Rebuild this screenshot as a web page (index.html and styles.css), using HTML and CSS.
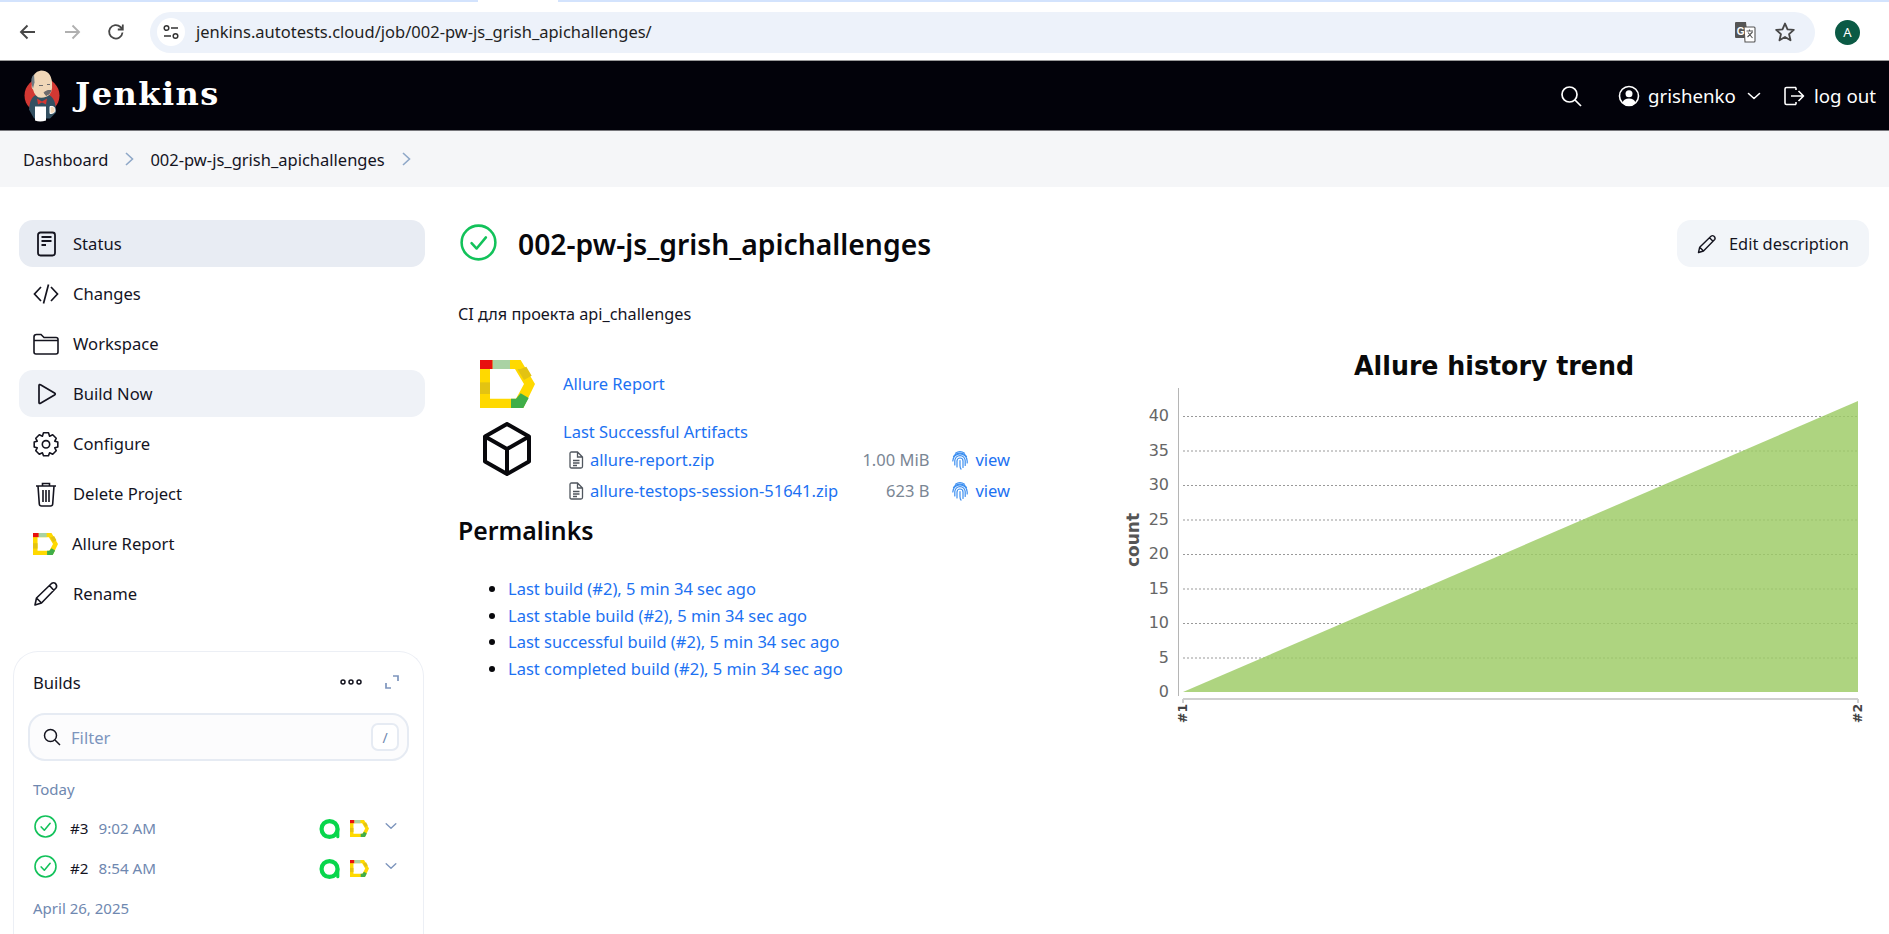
FILE: index.html
```html
<!DOCTYPE html>
<html lang="en">
<head>
<meta charset="utf-8">
<title>002-pw-js_grish_apichallenges - Jenkins</title>
<link rel="stylesheet" href="styles.css">
</head>
<body>
<svg class="defs" width="0" height="0">
  <symbol id="allure" viewBox="0 0 165 144" preserveAspectRatio="none">
    <path fill="#ffd900" fill-rule="evenodd" d="M0 0H122L165 72L130 144H0ZM30 27V116H108L132 72L105 27Z"/>
    <rect width="38" height="27" fill="#e8100f"/>
    <rect x="38" width="52" height="27" fill="#a9d2a4"/>
    <rect y="67" width="30" height="35" fill="#e3c312"/>
    <path fill="#e3c312" d="M112 27H122L139 20L155 47L132 60Z"/>
    <path fill="#3fae49" d="M93 116H108L122 100L146 114L130 144H93Z"/>
  </symbol>
  <symbol id="okc" viewBox="0 0 32 32">
    <circle cx="16" cy="16" r="14.6" fill="none" stroke="#12c25a" stroke-width="2.2"/>
    <path d="M10 16.6l4.4 4.6 8-9.6" fill="none" stroke="#12c25a" stroke-width="2.2" stroke-linecap="round" stroke-linejoin="round"/>
  </symbol>
  <symbol id="alogo" viewBox="0 0 24 24">
    <circle cx="11.500" cy="12" r="8.700" fill="none" stroke="#08d64c" stroke-width="4.600"/>
    <path d="M20.500 12V20.500" fill="none" stroke="#08d64c" stroke-width="3.400" stroke-linecap="round"/>
  </symbol>
  <symbol id="chev" viewBox="0 0 16 16">
    <path d="M2.500 5.500L8 10.500L13.500 5.500" fill="none" stroke="currentColor" stroke-width="1.600" stroke-linecap="round" stroke-linejoin="round"/>
  </symbol>
  <symbol id="file" viewBox="0 0 16 18">
    <path d="M2 2.500Q2 1 3.500 1H9.500L14.500 6V15.500Q14.500 17 13 17H3.500Q2 17 2 15.500ZM9.500 1V6H14.500M5 9.500H11.500M5 12H11.500M5 14.500H9" fill="none" stroke="#50565e" stroke-width="1.300"/>
  </symbol>
  <symbol id="finger" viewBox="0 0 18 20">
    <g fill="none" stroke="#3d8ff0" stroke-width="1.200" stroke-linecap="round">
      <path d="M4.500 3.200A8 8 0 0 1 13.500 3.200"/>
      <path d="M2.500 6.500A8 8 0 0 1 15.500 6.500"/>
      <path d="M1.800 11A7.200 7.200 0 0 1 16.200 11V13"/>
      <path d="M3.800 15V10.800A5.200 5.200 0 0 1 14.200 10.800V15.500"/>
      <path d="M6 17V11A3 3 0 0 1 12 11V17.500"/>
      <path d="M9 10.500V15.500Q9 18 10 19"/>
    </g>
  </symbol>
</svg>

<div class="tabstrip"></div>
<div class="browserbar">
  <svg class="nav-ic" viewBox="0 0 20 20"><path d="M17 10H3.500M9.500 3.500L3 10L9.500 16.500" fill="none" stroke="#474747" stroke-width="1.900"/></svg>
  <svg class="nav-ic" viewBox="0 0 20 20"><path d="M3 10H16.500M10.500 3.500L17 10L10.500 16.500" fill="none" stroke="#b0b0b0" stroke-width="1.900"/></svg>
  <svg class="nav-ic" viewBox="0 0 20 20"><path d="M16.500 10.500A6.700 6.700 0 1 1 14.500 5L16.500 7M16.800 2.500V7.500H11.800" fill="none" stroke="#474747" stroke-width="1.800"/></svg>
  <div class="omnibox">
    <span class="site-info">
      <svg viewBox="0 0 20 20" width="20" height="20"><circle cx="5.500" cy="6" r="2.300" fill="none" stroke="#333" stroke-width="1.500"/><path d="M10 6H17M3 14H10" stroke="#333" stroke-width="1.500"/><circle cx="14.500" cy="14" r="2.300" fill="none" stroke="#333" stroke-width="1.500"/></svg>
    </span>
    <span class="url">jenkins.autotests.cloud/job/002-pw-js_grish_apichallenges/</span>
    <svg class="translate" viewBox="0 0 22 22" width="22" height="22">
      <path d="M1 1H12L14 6H20Q21 6 21 7V20Q21 21 20 21H10L9 17H1Z" fill="#fff"/>
      <path d="M2 1H12L14 17H2Q1 17 1 16V2Q1 1 2 1Z" fill="#555"/>
      <path d="M10 6H20Q21 6 21 7V20Q21 21 20 21H11ZM12.500 10H19M15.500 8.500V10M13.500 16L18.500 11M14 11.500L18.500 17" fill="#fff" stroke="#555" stroke-width="1.100"/>
      <text x="2.800" y="13.500" class="translate-g">G</text>
    </svg>
    <svg class="star" viewBox="0 0 20 20" width="22" height="22"><path d="M10 2.300L12.300 7.600L18 8.100L13.700 11.900L15 17.500L10 14.500L5 17.500L6.300 11.900L2 8.100L7.700 7.600Z" fill="none" stroke="#474747" stroke-width="1.700" stroke-linejoin="round"/></svg>
  </div>
  <span class="avatar">A</span>
</div>

<header class="topbar">
  <a class="brand">
    <svg class="butler" viewBox="0 0 36 54" width="36" height="55">
      <circle cx="18" cy="27" r="17.500" fill="#d33833"/>
      <path d="M5 41Q6 27 14 26L24 26Q32 29 32 44L26 50H10Z" fill="#335061"/>
      <path d="M8 15Q8 3 17 2Q27 2 28 14Q29 25 23 28Q15 31 12 27Q10 25 9 21Q7 20 8 15Z" fill="#f0d6b7"/>
      <path d="M8 17Q6 9 10 6L10.500 14L9 20Z" fill="#6d7a83"/>
      <path d="M15 17H19M23 16H26M20 24Q24 21 27 22Q26 26 22 27Z" fill="#6d6b6d" stroke="#6d6b6d"/>
      <path d="M13 30L18 33L23 30L22 36L18 34L14 36Z" fill="#d33833"/>
      <path d="M11 38H22L22 52Q16 54 11 52Z" fill="#fff"/>
      <path d="M26 38Q31 37 31 42Q31 45 26 45Z" fill="#f0d6b7" stroke="#fff"/>
    </svg>
    <span class="brand-name">Jenkins</span>
  </a>
  <div class="top-actions">
    <svg class="top-search" viewBox="0 0 24 24" width="24" height="24"><circle cx="10.500" cy="10.500" r="7.500" fill="none" stroke="#fff" stroke-width="1.700"/><path d="M16 16L22 22" stroke="#fff" stroke-width="1.700"/></svg>
    <a class="user">
      <svg viewBox="0 0 22 22" width="22" height="22"><circle cx="11" cy="11" r="9.500" fill="none" stroke="#fff" stroke-width="1.600"/><circle cx="11" cy="8.800" r="3.500" fill="#fff"/><path d="M4.500 17.500Q6 13.500 11 13.500Q16 13.500 17.500 17.500Q15 20.500 11 20.500Q7 20.500 4.500 17.500Z" fill="#fff"/></svg>
      <span>grishenko</span>
      <svg class="user-chev" width="16" height="16"><use href="#chev"/></svg>
    </a>
    <a class="logout">
      <svg viewBox="0 0 22 22" width="22" height="22"><path d="M13 2.500H3.500Q2 2.500 2 4V18Q2 19.500 3.500 19.500H13M8 11H20.500M15.500 6L20.500 11L15.500 16" fill="none" stroke="#fff" stroke-width="1.600" stroke-linejoin="round"/><path d="M13 2.500V5M13 17V19.500" stroke="#fff" stroke-width="1.600"/></svg>
      <span>log out</span>
    </a>
  </div>
</header>

<nav class="crumbs">
  <a>Dashboard</a>
  <svg class="crumb-sep" viewBox="0 0 12 16" width="12" height="16"><path d="M3 2L9.500 8L3 14" fill="none" stroke="#8fa8c8" stroke-width="1.600"/></svg>
  <a>002-pw-js_grish_apichallenges</a>
  <svg class="crumb-sep" viewBox="0 0 12 16" width="12" height="16"><path d="M3 2L9.500 8L3 14" fill="none" stroke="#8fa8c8" stroke-width="1.600"/></svg>
</nav>

<div class="page">
  <aside class="side">
    <ul class="tasks">
      <li class="task task-active">
        <svg viewBox="0 0 26 26" width="26" height="26"><rect x="5" y="1.500" width="17" height="23" rx="2.500" fill="none" stroke="#14141f" stroke-width="1.800"/><path d="M8.500 6H18.500M8.500 10H18.500M8.500 14H13" stroke="#14141f" stroke-width="1.800"/></svg>
        <span>Status</span>
      </li>
      <li class="task">
        <svg viewBox="0 0 26 26" width="26" height="26"><path d="M8 6L1.500 13L8 20M18 6L24.500 13L18 20M15.500 3.500L10.500 22.500" fill="none" stroke="#14141f" stroke-width="1.700"/></svg>
        <span>Changes</span>
      </li>
      <li class="task">
        <svg viewBox="0 0 26 26" width="26" height="26"><path d="M1 6Q1 3.500 3.500 3.500H8L11 6.500H23Q25 6.500 25 8.500V21Q25 23 23 23H3Q1 23 1 21ZM1 9.500H25" fill="none" stroke="#14141f" stroke-width="1.600"/></svg>
        <span>Workspace</span>
      </li>
      <li class="task task-build">
        <svg viewBox="0 0 26 26" width="26" height="26"><path d="M6 4.500Q6 3 7.500 3.800L21.500 12Q23 13 21.500 14L7.500 22.200Q6 23 6 21.500Z" fill="none" stroke="#14141f" stroke-width="1.700"/></svg>
        <span>Build Now</span>
      </li>
      <li class="task">
        <svg viewBox="0 0 26 26" width="26" height="26"><path d="M10.500 1.800H15.500L16.600 5.200L19.700 3.800L23.200 7.300L21.800 10.200L24.800 11V16L21.800 16.800L23.200 19.700L19.700 23.200L16.600 21.800L15.500 24.800H10.500L9.400 21.800L6.300 23.200L2.800 19.700L4.200 16.800L1.200 16V11L4.200 10.200L2.800 7.300L6.300 3.800L9.400 5.200Z" fill="none" stroke="#14141f" stroke-width="1.600" stroke-linejoin="round"/><circle cx="13" cy="13.300" r="3.700" fill="none" stroke="#14141f" stroke-width="1.600"/></svg>
        <span>Configure</span>
      </li>
      <li class="task">
        <svg viewBox="0 0 26 26" width="26" height="26"><path d="M3 5H23M9.500 5V2.500H16.500V5M5 5L6.300 23Q6.500 25 8.500 25H17.500Q19.500 25 19.700 23L21 5M10 9V21M13 9V21M16 9V21" fill="none" stroke="#14141f" stroke-width="1.600"/></svg>
        <span>Delete Project</span>
      </li>
      <li class="task">
        <svg class="task-allure" width="25" height="22"><use href="#allure"/></svg>
        <span>Allure Report</span>
      </li>
      <li class="task">
        <svg viewBox="0 0 26 26" width="26" height="26"><path d="M2 24L3.500 17L18.500 2.500Q20.500 1 22.500 2.500Q24.500 5 23 7L8.500 22ZM3.500 17L8.500 22M16.500 4.500L21 9.500" fill="none" stroke="#14141f" stroke-width="1.600" stroke-linejoin="round"/></svg>
        <span>Rename</span>
      </li>
    </ul>

    <section class="builds">
      <div class="builds-head">
        <span class="builds-title">Builds</span>
        <svg viewBox="0 0 22 8" width="22" height="8"><g fill="none" stroke="#14141f" stroke-width="1.500"><circle cx="3" cy="4" r="2"/><circle cx="11" cy="4" r="2"/><circle cx="19" cy="4" r="2"/></g></svg>
        <svg class="expand" viewBox="0 0 16 16" width="16" height="16"><path d="M9 2H14V7M2 9V14H7" fill="none" stroke="#7d95bd" stroke-width="1.700"/></svg>
      </div>
      <div class="filter">
        <svg viewBox="0 0 20 20" width="20" height="20"><circle cx="8.500" cy="8.500" r="6" fill="none" stroke="#14141f" stroke-width="1.500"/><path d="M13 13L18 18" stroke="#14141f" stroke-width="1.500"/></svg>
        <span class="filter-ph">Filter</span>
        <kbd class="filter-key">/</kbd>
      </div>
      <div class="day">Today</div>
      <div class="build">
        <svg class="build-ok" width="23" height="23"><use href="#okc"/></svg>
        <span class="build-no">#3</span>
        <span class="build-time">9:02 AM</span>
        <svg class="build-a" width="22" height="22"><use href="#alogo"/></svg>
        <svg class="build-al" width="19" height="17"><use href="#allure"/></svg>
        <svg class="build-chev" width="14" height="14"><use href="#chev"/></svg>
      </div>
      <div class="build">
        <svg class="build-ok" width="23" height="23"><use href="#okc"/></svg>
        <span class="build-no">#2</span>
        <span class="build-time">8:54 AM</span>
        <svg class="build-a" width="22" height="22"><use href="#alogo"/></svg>
        <svg class="build-al" width="19" height="17"><use href="#allure"/></svg>
        <svg class="build-chev" width="14" height="14"><use href="#chev"/></svg>
      </div>
      <div class="day day-second">April 26, 2025</div>
    </section>
  </aside>

  <main class="main">
    <div class="title-row">
      <svg class="title-ok" width="37" height="37"><use href="#okc"/></svg>
      <h1 class="title">002-pw-js_grish_apichallenges</h1>
      <a class="edit">
        <svg viewBox="0 0 20 20" width="20" height="20"><path d="M1.500 18.500L2.700 13.200L14 2.200Q15.500 1 17 2.200Q18.800 4 17.700 5.500L6.500 17ZM2.700 13.200L6.500 17M12.500 3.800L16 7.300" fill="none" stroke="#14141f" stroke-width="1.400" stroke-linejoin="round"/></svg>
        <span>Edit description</span>
      </a>
    </div>
    <p class="desc">CI для проекта api_challenges</p>
    <div class="content">
      <div class="left">
        <div class="action action-allure">
          <svg class="action-ic" width="55" height="48"><use href="#allure"/></svg>
          <a class="link">Allure Report</a>
        </div>
        <div class="action action-art">
          <svg class="action-ic cube" viewBox="0 0 50 54" width="50" height="54"><path d="M25 2L47 14.500V39.500L25 52L3 39.500V14.500ZM3 14.500L25 27L47 14.500M25 27V52" fill="none" stroke="#08080c" stroke-width="4" stroke-linejoin="round"/></svg>
          <div class="art-body">
            <a class="link">Last Successful Artifacts</a>
            <div class="files">
              <svg width="16" height="18"><use href="#file"/></svg>
              <a class="link">allure-report.zip</a>
              <span class="size">1.00 MiB</span>
              <svg width="18" height="20"><use href="#finger"/></svg>
              <a class="link">view</a>
              <svg width="16" height="18"><use href="#file"/></svg>
              <a class="link">allure-testops-session-51641.zip</a>
              <span class="size">623 B</span>
              <svg width="18" height="20"><use href="#finger"/></svg>
              <a class="link">view</a>
            </div>
          </div>
        </div>
        <h2 class="perma">Permalinks</h2>
        <ul class="perma-list">
          <li><a class="link">Last build (#2), 5 min 34 sec ago</a></li>
          <li><a class="link">Last stable build (#2), 5 min 34 sec ago</a></li>
          <li><a class="link">Last successful build (#2), 5 min 34 sec ago</a></li>
          <li><a class="link">Last completed build (#2), 5 min 34 sec ago</a></li>
        </ul>
      </div>
      <svg class="chart" viewBox="0 0 771 400" width="771" height="400">
        <text class="chart-title" x="376" y="35" textLength="280" lengthAdjust="spacingAndGlyphs">Allure history trend</text>
        <line class="axis" x1="60.500" y1="48" x2="60.500" y2="356"/>
        <g class="grid">
          <line x1="65" y1="318" x2="740" y2="318"/>
          <line x1="65" y1="283.500" x2="740" y2="283.500"/>
          <line x1="65" y1="249" x2="740" y2="249"/>
          <line x1="65" y1="214.500" x2="740" y2="214.500"/>
          <line x1="65" y1="180" x2="740" y2="180"/>
          <line x1="65" y1="145.500" x2="740" y2="145.500"/>
          <line x1="65" y1="111" x2="740" y2="111"/>
          <line x1="65" y1="76.500" x2="740" y2="76.500"/>
        </g>
        <polygon class="area" points="65,352 740,61 740,352"/>
        <g class="tick">
          <text x="51" y="357">0</text>
          <text x="51" y="323">5</text>
          <text x="51" y="288">10</text>
          <text x="51" y="254">15</text>
          <text x="51" y="219">20</text>
          <text x="51" y="185">25</text>
          <text x="51" y="150">30</text>
          <text x="51" y="116">35</text>
          <text x="51" y="81">40</text>
        </g>
        <text class="count" transform="translate(21 200) rotate(-90)">count</text>
        <path class="xaxis" d="M65 359H740M65 359V363M740 359V363"/>
        <text class="xlabel" transform="translate(69 383) rotate(-90)">#1</text>
        <text class="xlabel" transform="translate(744 383) rotate(-90)">#2</text>
      </svg>
    </div>
  </main>
</div>
</body>
</html>
```
FILE: styles.css
```css
* { box-sizing: border-box; }
html, body { margin: 0; height: 934px; overflow: hidden; background: #fff; }
body { font-family: "Noto Sans", "Open Sans", sans-serif; font-size: 16.5px; color: #14141f; width: 1889px; }
.defs { position: absolute; }
a { color: inherit; text-decoration: none; }
ul { list-style: none; margin: 0; padding: 0; }

.tabstrip { height: 2px; background: linear-gradient(to right, #d3e3fd 478px, #fff 478px, #fff 558px, #d3e3fd 558px); }
.browserbar { height: 58px; display: flex; align-items: center; padding: 2px 0 0 18px; background: #fff; }
.nav-ic { width: 20px; height: 20px; margin-right: 24px; flex: none; }
.omnibox { width: 1665px; height: 41px; background: #edf2fa; border-radius: 21px; display: flex; align-items: center; padding-left: 7px; flex: none; }
.site-info { width: 28px; height: 28px; border-radius: 50%; background: #fff; display: flex; align-items: center; justify-content: center; }
.url { margin: -2px 0 0 11px; font-size: 16.5px; color: #1f1f1f; flex: 1; }
.translate { margin-right: 18px; }
.translate-g { font: bold 10px "Liberation Sans", sans-serif; fill: #fff; }
.star { margin-right: 19px; }
.avatar { width: 25px; height: 25px; margin-left: 20px; border-radius: 50%; background: #0b5a45; color: #fff; font-size: 13px; display: flex; align-items: center; justify-content: center; flex: none; }

.topbar { height: 71px; background: #02020a; border-top: 1px solid #9a9a9a; border-bottom: 1px solid #77777c; display: flex; align-items: center; padding: 0 13px 0 24px; justify-content: space-between; color: #fff; }
.brand { display: flex; align-items: center; gap: 15px; }
.brand-name { font-family: "DejaVu Serif", "Liberation Serif", serif; font-weight: 700; font-size: 32px; letter-spacing: 1.500px; line-height: 36px; margin-top: -4px; }
.top-actions { display: flex; align-items: center; font-size: 18.7px; }
.top-search { margin-right: 35px; }
.user { display: flex; align-items: center; gap: 8px; }
.user-chev { color: #fff; margin-left: 2px; }
.logout { display: flex; align-items: center; gap: 9px; margin-left: 21px; }

.crumbs { height: 56px; background: #f5f6f8; display: flex; align-items: center; padding-left: 23px; font-size: 16.5px; gap: 15px; }

.page { display: flex; align-items: flex-start; }
.side { width: 458px; padding: 33px 0 0 13px; flex: none; }
.tasks { display: flex; flex-direction: column; gap: 3px; width: 406px; margin-left: 6px; font-size: 16.6px; }
.task { height: 47px; border-radius: 14px; display: flex; align-items: center; padding-left: 14px; gap: 14px; }
.task svg { flex: none; }
.task-active { background: #e8ecf3; }
.task-build { background: #eff2f7; }
.builds { width: 411px; margin-top: 34px; height: 283px; border: 1px solid #eceff5; border-bottom: 0; border-radius: 25px 25px 0 0; padding: 15px 14px 0 14px; overflow: hidden; }
.builds-head { display: flex; align-items: center; height: 30px; }
.builds-title { font-size: 16.6px; margin-left: 5px; flex: 1; }
.expand { margin-left: 22px; margin-right: 9px; }
.filter { height: 48px; margin-top: 16px; border: 2px solid #e6ebf3; border-radius: 17px; background: #fcfcfd; display: flex; align-items: center; padding: 0 8px 0 12px; }
.filter-ph { margin-left: 9px; font-size: 16.6px; color: #7d95bd; flex: 1; }
.filter-key { width: 28px; height: 28px; border: 2px solid #e6ebf3; border-radius: 7px; background: #fff; color: #6f88b0; font-family: inherit; font-size: 14px; display: flex; align-items: center; justify-content: center; }
.day { font-size: 15px; color: #6f88b0; margin: 17px 0 0 5px; height: 22px; line-height: 22px; }
.day-second { margin-top: 9px; }
.build { display: flex; align-items: center; height: 40px; padding-left: 6px; font-size: 15.2px; }
.day + .build { margin-top: 8px; }
.build-ok { margin-top: -3px; }
.build-no { margin-left: 13px; color: #14141f; }
.build-time { margin-left: 10px; color: #6f88b0; flex: 1; }
.build-a { margin-right: 9px; margin-top: 1px; }
.build-al { margin-right: 15px; margin-top: 1px; }
.build-chev { color: #7d95bd; margin-right: 11px; margin-top: -4px; }

.main { flex: 1; padding-top: 33px; min-width: 0; }
.title-row { display: flex; align-items: center; height: 47px; padding-right: 20px; }
.title-ok { margin-left: 2px; margin-right: 21px; margin-top: -2px; flex: none; }
.title { flex: 1; margin: 0; font-size: 28.3px; font-weight: 600; color: #08080c; }
.edit { height: 47px; width: 192px; background: #f2f5f9; border-radius: 14px; display: flex; align-items: center; gap: 12px; padding-left: 20px; font-size: 16.4px; flex: none; }
.desc { margin: 35px 0 0; font-size: 16.25px; line-height: 24px; height: 24px; color: #14141f; }
.content { display: flex; align-items: flex-start; height: 400px; margin-top: 14px; }
.left { width: 660px; flex: none; color: #1c71f2; }
.link { color: #1c71f2; }
.action { display: flex; }
.action-ic { flex: none; margin-left: 22px; }
.action-allure { height: 73px; align-items: center; margin-top: 7px; gap: 28px; }
.action-art { gap: 30px; }
.cube { margin-left: 24px; margin-top: 2px; }
.art-body { width: 447px; margin-left: 1px; }
.art-body > .link { display: block; line-height: 24px; }
.files { display: grid; grid-template-columns: 16px 1fr auto 18px auto; column-gap: 6px; row-gap: 7px; padding-left: 5px; margin-top: 4px; align-items: center; line-height: 24px; }
.size { color: #7a8694; margin-right: 16px; text-align: right; }
.perma { margin: 9px 0 0; font-size: 24.8px; line-height: 36px; font-weight: 600; color: #08080c; }
.perma-list { list-style: disc; margin: 28px 0 0; padding-left: 50px; color: #08080c; }
.perma-list li { line-height: 26.5px; }
.chart { flex: none; }
.chart-title { font: bold 26px "DejaVu Sans", sans-serif; text-anchor: middle; fill: #0a0a0a; }
.axis { stroke: #b5b5b5; stroke-width: 1; }
.grid line { stroke: #999; stroke-width: 1; stroke-dasharray: 2 2; }
.area { fill: #9ccb64; fill-opacity: 0.82; }
.tick text { font: 16px "DejaVu Sans", sans-serif; text-anchor: end; fill: #666; }
.count { font: bold 17px "DejaVu Sans", sans-serif; text-anchor: middle; fill: #555; }
.xaxis { fill: none; stroke: #cfcfcf; stroke-width: 2; }
.xlabel { font: bold 12.500px "DejaVu Sans", sans-serif; fill: #444; }
```
